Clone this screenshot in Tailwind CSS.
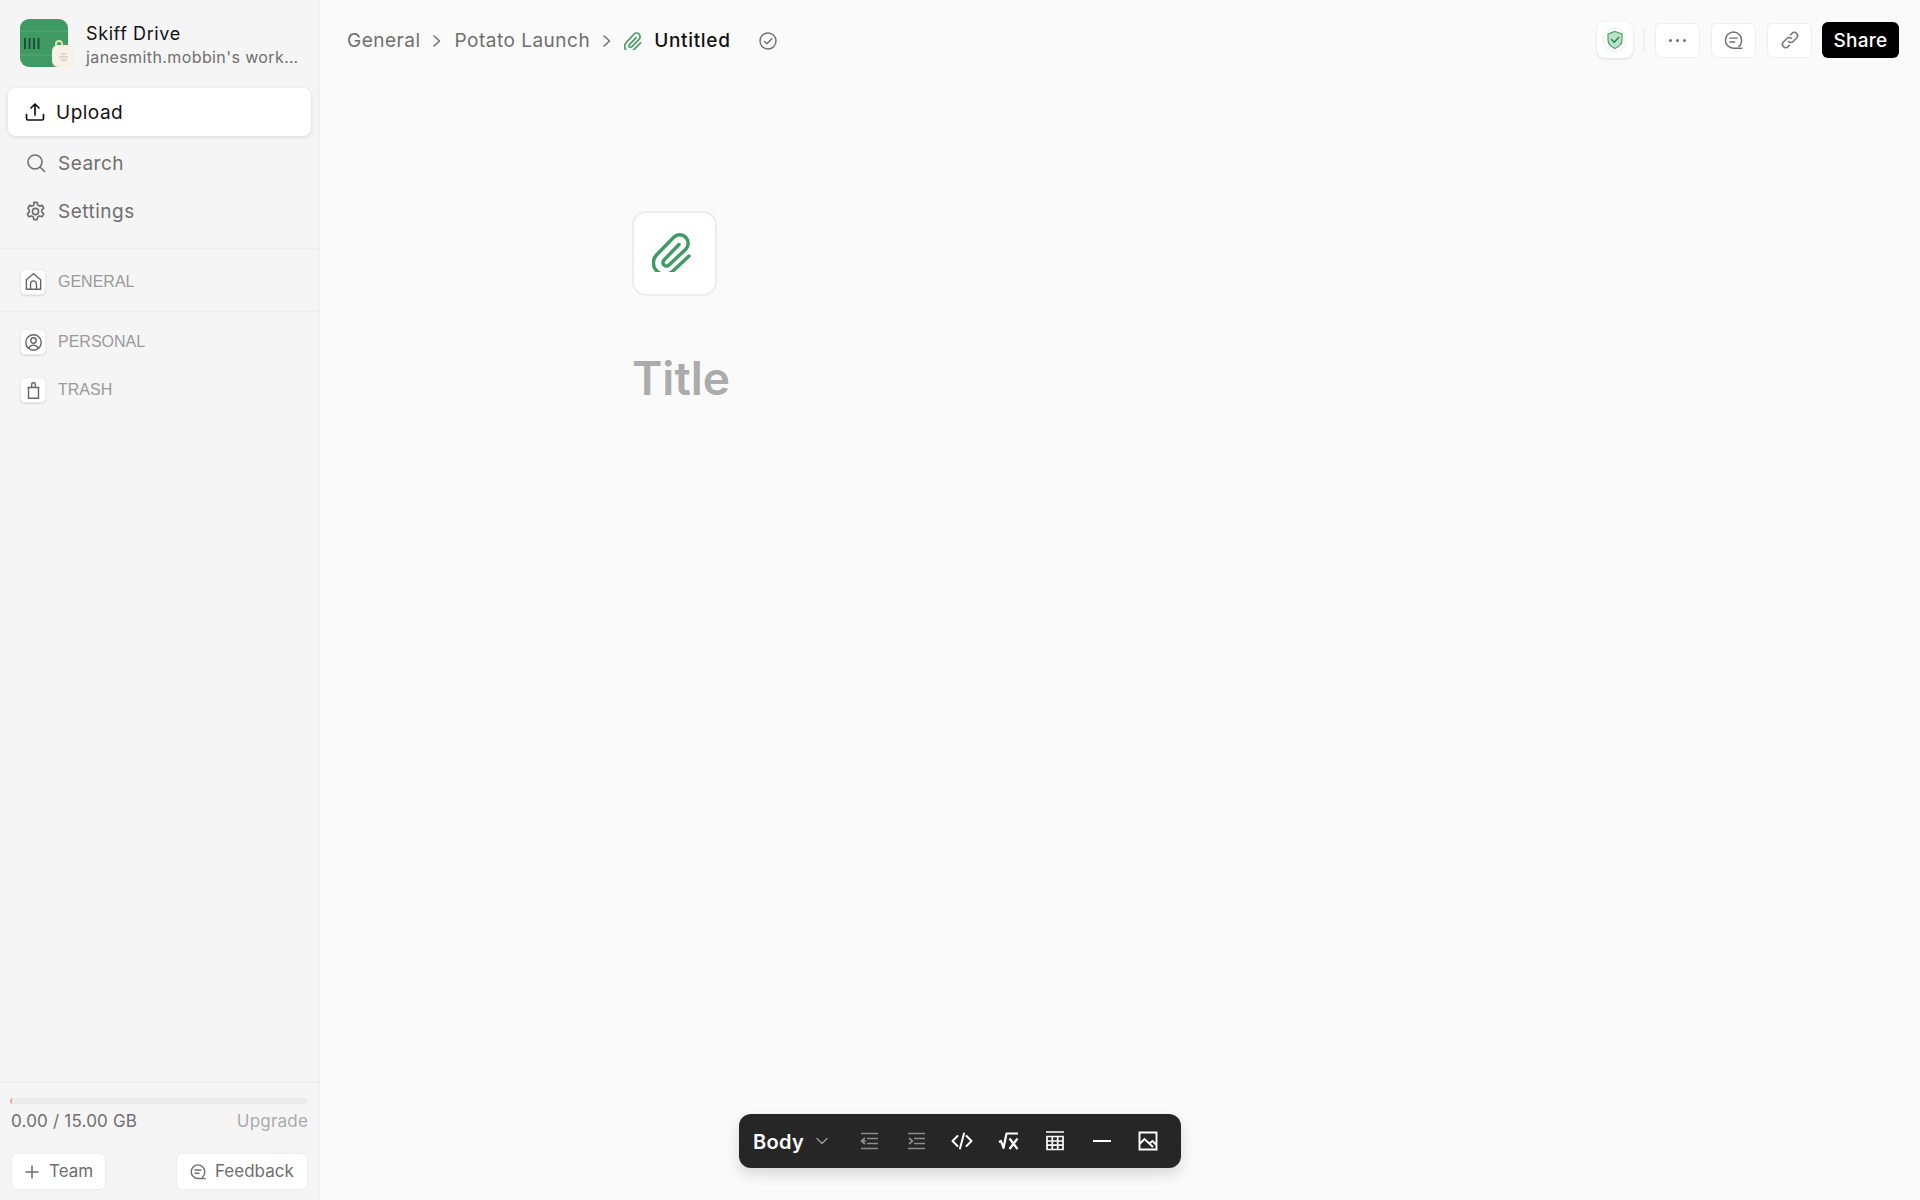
<!DOCTYPE html>
<html lang="en">
<head>
    <meta charset="UTF-8">
    <title>Skiff Drive</title>
    <script src="https://cdn.jsdelivr.net/npm/@tailwindcss/browser@4"></script>
</head>
<body class="bg-[#fafafa] font-['Inter',sans-serif] overflow-hidden">
    <div class="flex h-[1200px] w-[1920px] relative">
        <!-- Sidebar -->
        <aside class="w-[320px] shrink-0 bg-[#f5f5f5] border-r-2 border-[#f0f0f0] flex flex-col">
            <div class="flex items-center h-[88px] pl-[20px] pt-[1px]">
                <svg class="w-[54px] h-[52px] shrink-0" viewBox="0 0 54 52">
                    <rect x="0" y="0" width="48" height="48" rx="9" fill="#3f9a63"/>
                    <path d="M0 12H48M0 36H48" stroke="#5aa878" stroke-width="1"/>
                    <path d="M5 19v11M9.500 19v11M14 19v11M18.500 19v11" stroke="#1f4f33" stroke-width="2"/>
                    <circle cx="39" cy="25" r="3" fill="none" stroke="#d6e8a8" stroke-width="2"/>
                    <rect x="32" y="26" width="22" height="22" rx="6" fill="#f8f1e6"/>
                    <path d="M41 35h5M39 38h9M41 41h6" stroke="#d8cdbd" stroke-width="1.500"/>
                </svg>
                <div class="ml-[12px] min-w-0">
                    <div class="text-[18px] leading-[26px] tracking-[0.6px] text-[#111]">Skiff Drive</div>
                    <div class="text-[16px] leading-[21px] tracking-[0.4px] text-[#6f6f6f] whitespace-nowrap">janesmith.mobbin's work…</div>
                </div>
            </div>
            <nav class="px-[8px] tracking-[0.5px]">
                <div class="h-[48px] bg-white rounded-[8px] shadow-[0_1px_4px_rgba(0,0,0,0.12)] flex items-center pl-[17px] gap-[11px] text-[19px] text-[#111] w-[303px]">
                    <svg class="w-[20px] h-[20px]" viewBox="0 0 20 20" fill="none" stroke="#111" stroke-width="1.700" stroke-linecap="round" stroke-linejoin="round"><path d="M10 13V2.500M6 6l4-4 4 4M1.500 12.500v4a1.500 1.500 0 0 0 1.500 1.500h14a1.500 1.500 0 0 0 1.500-1.500v-4"/></svg>
                    <span class="pt-[2px]">Upload</span>
                </div>
                <div class="h-[48px] flex items-center pl-[18px] gap-[12px] text-[19px] text-[#6f6f6f] mt-[3px]">
                    <svg class="w-[20px] h-[20px]" viewBox="0 0 20 20" fill="none" stroke="#6f6f6f" stroke-width="1.600" stroke-linecap="round"><circle cx="9" cy="9" r="7"/><path d="M14 14l4.500 4.500"/></svg>
                    <span class="pt-[2px]">Search</span>
                </div>
                <div class="h-[48px] flex items-center pl-[16px] gap-[11px] text-[19px] text-[#6f6f6f]">
                    <svg class="w-[23px] h-[23px]" viewBox="0 0 24 24" fill="none" stroke="#6f6f6f" stroke-width="1.700" stroke-linecap="round" stroke-linejoin="round"><circle cx="12" cy="12" r="3.200"/><path d="M10.300 2.500h3.400l.6 2.800 1.900 1.100 2.700-.9 1.700 3-2.100 1.900v2.200l2.100 1.900-1.700 3-2.700-.9-1.900 1.100-.6 2.800h-3.400l-.6-2.800-1.900-1.100-2.700.9-1.700-3 2.100-1.900v-2.200L4.100 8.500l1.700-3 2.700.9 1.900-1.100z"/></svg>
                    <span class="pt-[2px]">Settings</span>
                </div>
            </nav>
            <div class="mt-[13px] border-t-2 border-[#efefef] h-[62px] flex items-center pl-[20px] pt-[3px] gap-[12px]">
                <span class="w-[26px] h-[26px] bg-white rounded-[5px] border border-[#eee] shadow-[0_1px_2px_rgba(0,0,0,0.12)] flex items-center justify-center">
                    <svg class="w-[19px] h-[19px]" viewBox="0 0 16 16" fill="none" stroke="#666" stroke-width="1.200" stroke-linejoin="round"><path d="M2 14.500V6.500L8 1.500l6 5v8zM5.500 14.500V10a2.500 2.500 0 0 1 5 0v4.500"/></svg>
                </span>
                <span class="text-[16px] text-[#9a9a9a] font-['Liberation_Sans',sans-serif]">GENERAL</span>
            </div>
            <div class="border-t-2 border-[#efefef] pt-[17px]">
                <div class="h-[26px] flex items-center pl-[20px] gap-[12px]">
                    <span class="w-[26px] h-[26px] bg-white rounded-[5px] border border-[#eee] shadow-[0_1px_2px_rgba(0,0,0,0.12)] flex items-center justify-center">
                        <svg class="w-[19px] h-[19px]" viewBox="0 0 16 16" fill="none" stroke="#666" stroke-width="1.200"><circle cx="8" cy="8" r="6.500"/><circle cx="8" cy="6.300" r="2.300"/><path d="M3.800 13c1-2 2.400-2.800 4.200-2.800s3.200.8 4.200 2.800"/></svg>
                    </span>
                    <span class="text-[16px] text-[#9a9a9a] font-['Liberation_Sans',sans-serif]">PERSONAL</span>
                </div>
                <div class="h-[26px] flex items-center pl-[20px] gap-[12px] mt-[22px]">
                    <span class="w-[26px] h-[26px] bg-white rounded-[5px] border border-[#eee] shadow-[0_1px_2px_rgba(0,0,0,0.12)] flex items-center justify-center">
                        <svg class="w-[19px] h-[19px]" viewBox="0 0 16 16" fill="none" stroke="#666" stroke-width="1.200"><path d="M3.800 5.500h8.400v9H3.800zM3 5.500h10M6.500 5.500V2.500a1 1 0 0 1 1-1h1a1 1 0 0 1 1 1v3"/></svg>
                    </span>
                    <span class="text-[16px] text-[#9a9a9a] font-['Liberation_Sans',sans-serif]">TRASH</span>
                </div>
            </div>
            <div class="mt-auto border-t-2 border-[#efefef] h-[119px] px-[10px] pt-[15px]">
                <div class="h-[6px] bg-[#ebebeb] rounded-full w-[298px] overflow-hidden">
                    <div class="h-full w-[2px] bg-[#e8a598]"></div>
                </div>
                <div class="flex justify-between items-center h-[26px] mt-[5px] pl-[1px] w-[298px] text-[17px] tracking-[0.2px]">
                    <span class="text-[#6f6f6f]">0.00 / 15.00 GB</span>
                    <span class="text-[#ababab]">Upgrade</span>
                </div>
                <div class="flex justify-between mt-[19px] pl-[2px] w-[297px] text-[17px] text-[#6f6f6f]">
                    <div class="h-[35px] w-[93px] bg-white rounded-[5px] shadow-[0_0_2px_rgba(0,0,0,0.12)] flex items-center pl-[13px] pt-[1px] gap-[10px]">
                        <svg class="w-[14px] h-[14px]" viewBox="0 0 14 14" fill="none" stroke="#6f6f6f" stroke-width="1.500" stroke-linecap="round"><path d="M7 1v12M1 7h12"/></svg>
                        Team
                    </div>
                    <div class="h-[35px] w-[130px] bg-white rounded-[5px] shadow-[0_0_2px_rgba(0,0,0,0.12)] flex items-center pl-[13px] pt-[1px] gap-[9px]">
                        <svg class="w-[16px] h-[16px]" viewBox="0 0 16 16" fill="none" stroke="#6f6f6f" stroke-width="1.400" stroke-linecap="round"><path d="M15 14.500H8a6.800 6.800 0 1 1 6.800-6.800c0 2.500-1 4.300-2.300 5.300M5 6h6M5 9.300h4"/></svg>
                        Feedback
                    </div>
                </div>
            </div>
        </aside>

        <!-- Main -->
        <main class="flex-1 min-w-0">
            <header class="flex items-center justify-between h-[80px] pl-[27px] pr-[21px]">
                <div class="flex items-center text-[19px] tracking-[0.5px] text-[#6f6f6f] pt-[2px]">
                    <span>General</span>
                    <svg class="w-[10px] h-[14px] mx-[12px]" viewBox="0 0 10 14" fill="none" stroke="#6f6f6f" stroke-width="1.500" stroke-linecap="round" stroke-linejoin="round"><path d="M2 2l5.500 5L2 12"/></svg>
                    <span>Potato Launch</span>
                    <svg class="w-[10px] h-[14px] mx-[12px]" viewBox="0 0 10 14" fill="none" stroke="#6f6f6f" stroke-width="1.500" stroke-linecap="round" stroke-linejoin="round"><path d="M2 2l5.500 5L2 12"/></svg>
                    <svg class="w-[18px] h-[18px] mr-[12px]" viewBox="0 0 40 40" fill="none" stroke="#4a9d6a" stroke-width="3.800" stroke-linecap="round"><path d="M37 24L21 40A11.500 11.500 0 0 1 4.700 23.700L22 5A8 8 0 0 1 33.500 16.300L17 33A3.500 3.500 0 0 1 12 28L27 12.500"/></svg>
                    <span class="text-[#111] font-medium tracking-[0.7px]">Untitled</span>
                    <svg class="w-[18px] h-[18px] ml-[28px]" viewBox="0 0 18 18" fill="none" stroke="#6f6f6f" stroke-width="1.400" stroke-linecap="round" stroke-linejoin="round"><circle cx="9" cy="9" r="8"/><path d="M5.500 9.500l2.500 2.300 4.800-5"/></svg>
                </div>
                <div class="flex items-center">
                    <div class="w-[36px] h-[36px] bg-white rounded-[8px] shadow-[0_1px_3px_rgba(0,0,0,0.12)] flex items-center justify-center">
                        <svg class="w-[26px] h-[26px]" viewBox="0 0 26 26" fill="none">
                            <circle cx="13" cy="13" r="11.500" stroke="#e6eee8" stroke-width="1"/>
                            <path d="M13 4.500l7 2.500v6c0 4-3 6.800-7 8.500-4-1.700-7-4.500-7-8.500V7z" fill="#b9e2c6" stroke="#4a9d6a" stroke-width="1.200"/>
                            <path d="M9.500 12.500l2.700 2.700 4.500-4.800" stroke="#2f8350" stroke-width="1.500" stroke-linecap="round" stroke-linejoin="round"/>
                        </svg>
                    </div>
                    <div class="w-[2px] h-[24px] bg-[#f0f0f0] mx-[10px]"></div>
                    <div class="flex gap-[11px]">
                        <div class="w-[45px] h-[35px] bg-white rounded-[6px] border border-[#efefef] flex items-center justify-center gap-[4px]">
                            <span class="w-[3px] h-[3px] rounded-full bg-[#6f6f6f]"></span>
                            <span class="w-[3px] h-[3px] rounded-full bg-[#6f6f6f]"></span>
                            <span class="w-[3px] h-[3px] rounded-full bg-[#6f6f6f]"></span>
                        </div>
                        <div class="w-[45px] h-[35px] bg-white rounded-[6px] border border-[#efefef] flex items-center justify-center">
                            <svg class="w-[19px] h-[19px]" viewBox="0 0 16 16" fill="none" stroke="#6f6f6f" stroke-width="1.200" stroke-linecap="round"><path d="M15 14.500H8a6.800 6.800 0 1 1 6.800-6.800c0 2.500-1 4.300-2.300 5.300M5 6h6M5 9.300h4"/></svg>
                        </div>
                        <div class="w-[45px] h-[35px] bg-white rounded-[6px] border border-[#efefef] flex items-center justify-center">
                            <svg class="w-[20px] h-[20px]" viewBox="0 0 20 20" fill="none" stroke="#777" stroke-width="1.500" stroke-linecap="round"><path d="M8.500 11.500a3.200 3.200 0 0 0 4.600 0l3.500-3.500a3.200 3.200 0 0 0-4.600-4.600l-1.300 1.300M11.500 8.500a3.200 3.200 0 0 0-4.600 0l-3.500 3.500a3.200 3.200 0 0 0 4.600 4.600l1.300-1.300"/></svg>
                        </div>
                    </div>
                    <div class="ml-[10px] w-[77px] h-[36px] bg-black text-white rounded-[6px] flex items-center justify-center text-[19px] font-medium tracking-[0.3px] pt-[2px]">Share</div>
                </div>
            </header>

            <div class="pl-[312px] pt-[131px]">
                <div class="w-[85px] h-[85px] bg-white rounded-[14px] border-2 border-[#ececec] flex items-center justify-center">
                    <svg class="w-[40px] h-[40px] mr-[6px] mb-[4px]" viewBox="0 0 40 40" fill="none" stroke="#3f9a63" stroke-width="3.500" stroke-linecap="round"><path d="M37 24L21 39A11.500 11.500 0 0 1 4.700 22.700L22 5A8.500 8.500 0 0 1 34 17L17 33A3.500 3.500 0 0 1 12 28L27 12.500"/></svg>
                </div>
                <h1 class="mt-[54px] text-[46px] leading-[56px] font-semibold text-[#ababab]">Title</h1>
            </div>
        </main>

        <!-- Floating format bar -->
        <div class="absolute left-[739px] top-[1114px] w-[442px] h-[54px] bg-[#262626] rounded-[12px] shadow-[0_6px_14px_rgba(0,0,0,0.14)] flex items-center pl-[14px] text-white">
            <span class="text-[20px] font-semibold tracking-[0.3px] w-[63px] pt-[1px]">Body</span>
            <svg class="w-[12px] h-[12px]" viewBox="0 0 12 12" fill="none" stroke="#9a9a9a" stroke-width="1.400" stroke-linecap="round" stroke-linejoin="round"><path d="M1 3.500l5 5 5-5"/></svg>
            <div class="flex items-center ml-[29px] gap-[22.500px]">
                <svg class="w-[24px] h-[24px]" viewBox="0 0 24 24" fill="none" stroke="#8c8c8c" stroke-width="1.700"><path d="M4 4.500h17M10 9.500h11M10 14.500h11M4 19.500h17M8 9l-3.500 3 3.500 3M5 12h4"/></svg>
                <svg class="w-[24px] h-[24px]" viewBox="0 0 24 24" fill="none" stroke="#8c8c8c" stroke-width="1.700"><path d="M4 4.500h17M10 9.500h11M10 14.500h11M4 19.500h17M5 9l3.500 3L5 15"/></svg>
                <svg class="w-[24px] h-[24px]" viewBox="0 0 24 24" fill="none" stroke="#fff" stroke-width="2" stroke-linecap="round" stroke-linejoin="round"><path d="M7.500 7l-5 5 5 5M16.500 7l5 5-5 5M14 4.500l-4 15"/></svg>
                <svg class="w-[24px] h-[24px]" viewBox="0 0 24 24" fill="none" stroke="#fff" stroke-width="2.200" stroke-linejoin="round"><path d="M2 13l2-1 2.500 7L9.500 4.500h11.500M12.500 9.500l8 10.500M20.500 9.500l-8 10.500"/></svg>
                <svg class="w-[24px] h-[24px]" viewBox="0 0 24 24" fill="none" stroke="#fff" stroke-width="1.700"><path d="M3 3h18M4 7.500h16v13H4zM4 12h16M4 16.200h16M9.300 7.500v13M14.700 7.500v13"/></svg>
                <svg class="w-[24px] h-[24px]" viewBox="0 0 24 24" fill="none" stroke="#fff" stroke-width="2"><path d="M3 12h18"/></svg>
                <svg class="w-[24px] h-[24px]" viewBox="0 0 24 24" fill="none" stroke="#fff" stroke-width="1.900"><path d="M3.500 3.500h17v17h-17zM3.500 15l5-5 8.500 8M14 14l2.500-2 4 4"/></svg>
            </div>
        </div>
    </div>
</body>
</html>
